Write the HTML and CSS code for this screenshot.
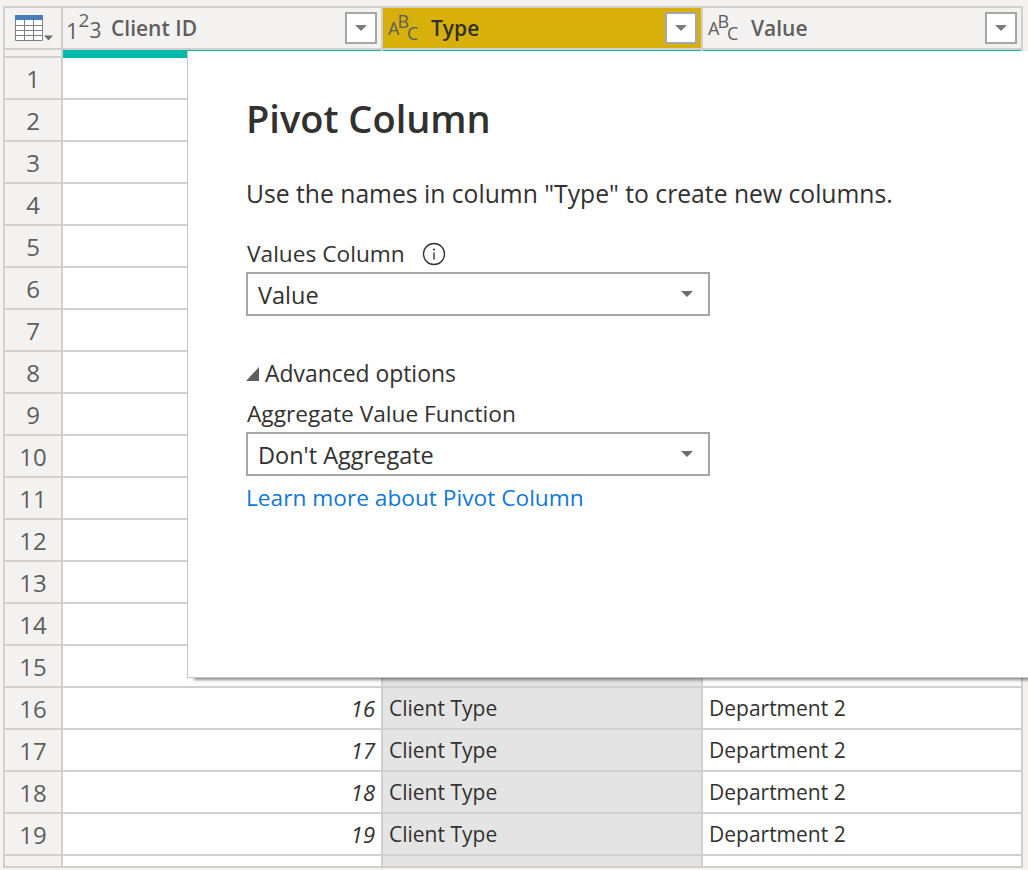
FILE: index.html
```html
<!DOCTYPE html>
<html lang="en">
<head>
    <meta charset="UTF-8">
    <title>Pivot Column</title>
    <link rel="stylesheet" href="styles.css">
</head>
<body>
    <div class="table">
        <div class="corner">
            <svg class="table-icon" width="40" height="28" viewBox="0 0 40 28">
                <rect x="0" y="0" width="28" height="5" fill="#4a7ebb"/>
                <path d="M.5 5v20.5h27V5M.5 10.500h27M.5 15.500h27M.5 20.500h27M9.500 5v20M18.500 5v20" fill="#fff" stroke="#808080"/>
                <path d="M29 20.500h9l-4.500 5z" fill="#6b6b6b"/>
            </svg>
        </div>
        <div class="head">
            <span class="type-icon nums"><i>1</i><i class="up">2</i><i class="down">3</i></span>
            <span class="head-name">Client ID</span>
            <span class="filter"></span>
        </div>
        <div class="head head-active">
            <span class="type-icon abc"><i>A</i><i class="up">B</i><i class="down">C</i></span>
            <span class="head-name">Type</span>
            <span class="filter"></span>
        </div>
        <div class="head">
            <span class="type-icon abc"><i>A</i><i class="up">B</i><i class="down">C</i></span>
            <span class="head-name">Value</span>
            <span class="filter"></span>
        </div>

        <div class="strip"></div>
        <div class="quality quality-first"></div>
        <div class="quality"></div>
        <div class="quality"></div>

        <div class="num">1</div><div class="cell"></div><div class="cell cell-active"></div><div class="cell"></div>
        <div class="num">2</div><div class="cell"></div><div class="cell cell-active"></div><div class="cell"></div>
        <div class="num">3</div><div class="cell"></div><div class="cell cell-active"></div><div class="cell"></div>
        <div class="num">4</div><div class="cell"></div><div class="cell cell-active"></div><div class="cell"></div>
        <div class="num">5</div><div class="cell"></div><div class="cell cell-active"></div><div class="cell"></div>
        <div class="num">6</div><div class="cell"></div><div class="cell cell-active"></div><div class="cell"></div>
        <div class="num">7</div><div class="cell"></div><div class="cell cell-active"></div><div class="cell"></div>
        <div class="num">8</div><div class="cell"></div><div class="cell cell-active"></div><div class="cell"></div>
        <div class="num">9</div><div class="cell"></div><div class="cell cell-active"></div><div class="cell"></div>
        <div class="num">10</div><div class="cell"></div><div class="cell cell-active"></div><div class="cell"></div>
        <div class="num">11</div><div class="cell"></div><div class="cell cell-active"></div><div class="cell"></div>
        <div class="num">12</div><div class="cell"></div><div class="cell cell-active"></div><div class="cell"></div>
        <div class="num">13</div><div class="cell"></div><div class="cell cell-active"></div><div class="cell"></div>
        <div class="num">14</div><div class="cell"></div><div class="cell cell-active"></div><div class="cell"></div>
        <div class="num">15</div><div class="cell"></div><div class="cell cell-active"></div><div class="cell"></div>
        <div class="num">16</div><div class="cell cell-id">16</div><div class="cell cell-active">Client Type</div><div class="cell">Department 2</div>
        <div class="num">17</div><div class="cell cell-id">17</div><div class="cell cell-active">Client Type</div><div class="cell">Department 2</div>
        <div class="num">18</div><div class="cell cell-id">18</div><div class="cell cell-active">Client Type</div><div class="cell">Department 2</div>
        <div class="num">19</div><div class="cell cell-id">19</div><div class="cell cell-active">Client Type</div><div class="cell">Department 2</div>
        <div class="num"></div><div class="cell"></div><div class="cell cell-active"></div><div class="cell"></div>
    </div>

    <div class="dialog">
        <h1>Pivot Column</h1>
        <p class="intro">Use the names in column "Type" to create new columns.</p>
        <div class="field-label">
            Values Column
            <svg class="info" width="24" height="24" viewBox="0 0 24 24">
                <circle cx="12" cy="12" r="10.500" fill="none" stroke="#323130" stroke-width="1.300"/>
                <path d="M12 10.500v7" stroke="#323130" stroke-width="1.400"/>
                <circle cx="12" cy="7.500" r="1" fill="#323130"/>
            </svg>
        </div>
        <div class="select">Value<span class="caret"></span></div>
        <div class="advanced"><span class="advanced-arrow"></span>Advanced options</div>
        <div class="field-label field-label-tight">Aggregate Value Function</div>
        <div class="select">Don't Aggregate<span class="caret"></span></div>
        <a class="learn" href="#">Learn more about Pivot Column</a>
    </div>
</body>
</html>
```

FILE: styles.css
```css
html, body {
    margin: 0;
    height: 870px;
    overflow: hidden;
}

body {
    background-color: #f3f2f1;
    font-family: "Open Sans", "Noto Sans", sans-serif;
    color: #323130;
    padding: 6px 0 0 3px;
    box-sizing: border-box;
    position: relative;
}

.table {
    display: grid;
    width: 1020px;
    box-sizing: border-box;
    grid-template-columns: 56px 318px 318px 318px;
    grid-template-rows: 40px 6px repeat(19, 40px) 10px;
    gap: 2px;
    padding: 2px;
    background-color: #d2d0ce;
}

.corner {
    background-color: #f3f2f1;
    padding: 7px 0 0 10px;
}

.table-icon {
    display: block;
}

.head {
    display: flex;
    align-items: center;
    background-color: #f3f2f1;
    color: #605e5c;
    padding-right: 4px;
}

.head-active {
    background-color: #d7b00b;
    color: #323130;
}

.head-name {
    font-size: 21px;
    font-weight: 600;
    flex: 1;
}

.type-icon {
    display: flex;
    color: #605e5c;
    line-height: 1;
}

.type-icon i {
    font-style: normal;
}

.nums {
    width: 45px;
    padding-left: 3px;
    font-size: 22px;
    margin-top: 3px;
}

.nums .up {
    font-size: 19px;
    transform: translateY(-8px);
}

.nums .down {
    font-size: 21px;
    transform: translateY(1px);
}

.abc {
    width: 43px;
    padding-left: 5px;
    font-size: 18px;
    letter-spacing: -2px;
}

.abc .up {
    transform: translateY(-7px);
}

.abc .down {
    transform: translateY(5px);
}

.filter {
    width: 32px;
    height: 32px;
    box-sizing: border-box;
    border: 2px solid #a6a6a6;
    background-color: #fff;
    display: flex;
    align-items: center;
    justify-content: center;
}

.filter::after {
    content: "";
    border-style: solid;
    border-width: 6px 6px 0;
    border-color: #7a7a7a transparent transparent;
}

.strip {
    background-color: #f3f2f1;
}

.quality {
    background-color: #01b8aa;
    height: 1px;
}

.quality-first {
    height: 8px;
}

.num {
    background-color: #f3f2f1;
    color: #605e5c;
    font-size: 24px;
    line-height: 42px;
    text-align: center;
}

.cell {
    background-color: #fff;
    font-size: 21px;
    line-height: 40px;
    padding: 0 6px;
    white-space: nowrap;
}

.cell-active {
    background-color: #e4e4e4;
}

.cell-id {
    text-align: right;
    font-style: italic;
    font-size: 22px;
}

.dialog {
    position: absolute;
    left: 187px;
    top: 51px;
    width: 841px;
    height: 627px;
    box-sizing: border-box;
    padding: 0 0 0 59px;
    background-color: #fff;
    border-left: 1px solid #c8c6c4;
    border-bottom: 1px solid #c8c6c4;
    box-shadow: 6px 3px 3px -1px rgba(0, 0, 0, 0.45);
    font-size: 22.700px;
}

.dialog h1 {
    margin: 42px 0 0 -1px;
    font-size: 38px;
    font-weight: 600;
    line-height: 50px;
}

.intro {
    margin: 34px 0 0 -1px;
    font-size: 24.700px;
    line-height: 34px;
}

.field-label {
    display: flex;
    align-items: center;
    gap: 17px;
    margin: 25px 0 1px;
    line-height: 35px;
}

.field-label-tight {
    margin-top: 5px;
}

.select {
    display: flex;
    align-items: center;
    justify-content: space-between;
    width: 464px;
    height: 44px;
    box-sizing: border-box;
    margin-left: -1px;
    border: 2px solid #a6a6a6;
    padding: 2px 15px 0 10px;
    font-size: 23.500px;
}

.caret {
    border-style: solid;
    border-width: 6px 6px 0;
    border-color: #6b6b6b transparent transparent;
    margin-top: -2px;
}

.advanced {
    display: flex;
    align-items: center;
    margin-top: 41px;
    font-size: 22.900px;
    line-height: 34px;
}

.advanced-arrow {
    width: 0;
    height: 0;
    margin: 0 6px 0 -1px;
    border-style: solid;
    border-width: 0 0 14px 13px;
    border-color: transparent transparent #605e5c;
}

.learn {
    display: block;
    margin: 5px 0 0 -1px;
    line-height: 34px;
    color: #0f78d4;
    text-decoration: none;
}
```
